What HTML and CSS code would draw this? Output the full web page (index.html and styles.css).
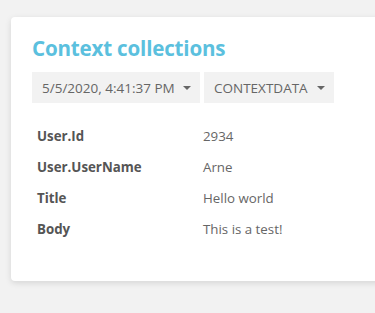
FILE: index.html
```html
<!DOCTYPE html>
<html>
<head>
<meta charset="utf-8">
<link rel="stylesheet" href="styles.css">
</head>
<body>
<div class="page">
  <div class="card">
    <h2 class="title">Context collections</h2>
    <div class="toolbar">
      <button class="dropdown dd-date">5/5/2020, 4:41:37 PM <span class="caret"></span></button>
      <button class="dropdown dd-coll">CONTEXTDATA <span class="caret"></span></button>
    </div>
    <table class="props">
      <tr><th>User.Id</th><td>2934</td></tr>
      <tr><th>User.UserName</th><td>Arne</td></tr>
      <tr><th>Title</th><td>Hello world</td></tr>
      <tr><th>Body</th><td>This is a test!</td></tr>
    </table>
  </div>
</div>
</body>
</html>
```
FILE: styles.css
```css
html, body {
  margin: 0;
  padding: 0;
  background: #f2f2f2;
  font-family: "Open Sans", "Noto Sans", sans-serif;
  color: #666;
}
.page {
  padding: 17px 0 0 11px;
  overflow: hidden;
  height: 313px;
  box-sizing: border-box;
}
.card {
  background: #fff;
  border-radius: 4px 0 0 4px;
  box-shadow: 0 2px 6px rgba(0,0,0,0.12);
  width: 380px;
  height: 264px;
  box-sizing: border-box;
  padding: 17px 0 0 21px;
}
.title {
  margin: 0;
  font-size: 20.6px;
  font-weight: 700;
  color: #5bc0de;
  line-height: 28px;
  letter-spacing: -0.2px;
}
.toolbar {
  display: flex;
  gap: 4px;
  margin-top: 10px;
}
.dropdown {
  font-family: inherit;
  font-size: 13.5px;
  color: #666;
  background: #f2f2f2;
  border: 0;
  height: 31px;
  padding: 0 9px 0 10px;
  display: flex;
  align-items: center;
  justify-content: space-between;
  white-space: nowrap;
  box-sizing: border-box;
}
.dd-date { width: 168px; }
.dd-coll { width: 130px; }
.caret {
  width: 0;
  height: 0;
  border-left: 4px solid transparent;
  border-right: 4px solid transparent;
  border-top: 4px solid #666;
}
.props {
  border-collapse: collapse;
  margin-top: 17px;
  font-size: 13.3px;
}
.props th, .props td {
  padding: 0 5px;
  height: 31px;
  text-align: left;
  vertical-align: middle;
}
.props th {
  font-weight: 700;
  color: #555;
  width: 156px;
}
.props td {
  color: #666;
}
```
